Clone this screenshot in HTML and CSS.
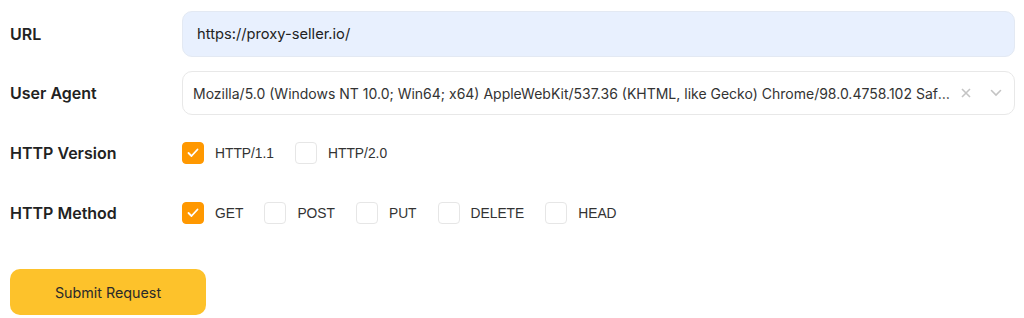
FILE: index.html
```html
<!DOCTYPE html>
<html lang="en">
<head>
<meta charset="utf-8">
<title>Request</title>
<link rel="stylesheet" href="styles.css">
</head>
<body>
<form class="form">
  <div class="row row-url">
    <label class="label">URL</label>
    <div class="input url-input">https://proxy-seller.io/</div>
  </div>
  <div class="row row-ua">
    <label class="label">User Agent</label>
    <div class="input select">
      <span class="select-value">Mozilla/5.0 (Windows NT 10.0; Win64; x64) AppleWebKit/537.36 (KHTML, like Gecko) Chrome/98.0.4758.102 Safari/537.36</span>
      <span class="clear">
        <svg width="10" height="10" viewBox="0 0 10 10"><path d="M1 1L9 9M9 1L1 9" stroke="#c4c4c4" stroke-width="1.6" fill="none"/></svg>
      </span>
      <span class="chev">
        <svg width="12" height="8" viewBox="0 0 12 8"><path d="M1.5 1.5L6 6L10.5 1.5" stroke="#c4c4c4" stroke-width="1.6" fill="none" stroke-linecap="round"/></svg>
      </span>
    </div>
  </div>
  <div class="row row-check">
    <label class="label">HTTP Version</label>
    <div class="checks">
      <span class="check"><span class="box on"><svg width="12" height="10" viewBox="0 0 12 10"><path d="M1.5 5L4.5 8L10.5 1.5" stroke="#fff" stroke-width="1.8" fill="none" stroke-linecap="round" stroke-linejoin="round"/></svg></span>HTTP/1.1</span>
      <span class="check"><span class="box"></span>HTTP/2.0</span>
    </div>
  </div>
  <div class="row row-check">
    <label class="label">HTTP Method</label>
    <div class="checks">
      <span class="check"><span class="box on"><svg width="12" height="10" viewBox="0 0 12 10"><path d="M1.5 5L4.5 8L10.5 1.5" stroke="#fff" stroke-width="1.8" fill="none" stroke-linecap="round" stroke-linejoin="round"/></svg></span>GET</span>
      <span class="check"><span class="box"></span>POST</span>
      <span class="check"><span class="box"></span>PUT</span>
      <span class="check"><span class="box"></span>DELETE</span>
      <span class="check"><span class="box"></span>HEAD</span>
    </div>
  </div>
  <button type="button" class="submit">Submit Request</button>
</form>
</body>
</html>
```
FILE: styles.css
```css
* { box-sizing: border-box; }
html, body { margin: 0; background: #fff; }
body { font-family: Inter, "Noto Sans", sans-serif; color: #222; }
.form { padding: 11px 9px 0 10px; display: flex; flex-direction: column; }
.row { display: flex; align-items: center; }
.row-url { height: 46px; }
.row-ua { height: 44px; margin-top: 14px; }
.row-check { height: 44px; margin-top: 16px; }
.label { width: 172px; flex: none; font-size: 16px; font-weight: 600; color: #222; }
.input { flex: 1; min-width: 0; border-radius: 10px; display: flex; align-items: center; font-size: 14px; color: #222; }
.url-input { height: 46px; background: #e8f0fe; border: 1px solid #e3e9f3; padding-left: 14px; font-size: 14.7px; }
.select { height: 44px; border: 1px solid #e8e8e8; padding-left: 10px; padding-right: 12px; color: #333; font-size: 14px; }
.select-value { flex: 1; min-width: 0; white-space: nowrap; overflow: hidden; text-overflow: ellipsis; padding-right: 6px; }
.clear { width: 12px; display: flex; justify-content: center; margin-right: 18px; }
.chev { width: 12px; display: flex; justify-content: center; }
.checks { display: flex; align-items: center; font-family: "Liberation Sans", Arial, sans-serif; font-size: 13.8px; color: #333; }
.check { display: flex; align-items: center; margin-right: 21px; }
.box { width: 22px; height: 22px; border: 1px solid #e6e6e6; border-radius: 4px; margin-right: 11px; display: flex; align-items: center; justify-content: center; }
.box.on { background: #ff9800; border-color: #ff9800; }
.submit { margin-top: 34px; width: 196px; height: 46px; border: none; border-radius: 10px; background: #fdc22b; font-family: Inter, "Noto Sans", sans-serif; font-size: 14.3px; color: #2a2a2a; align-self: flex-start; cursor: pointer; }
```
